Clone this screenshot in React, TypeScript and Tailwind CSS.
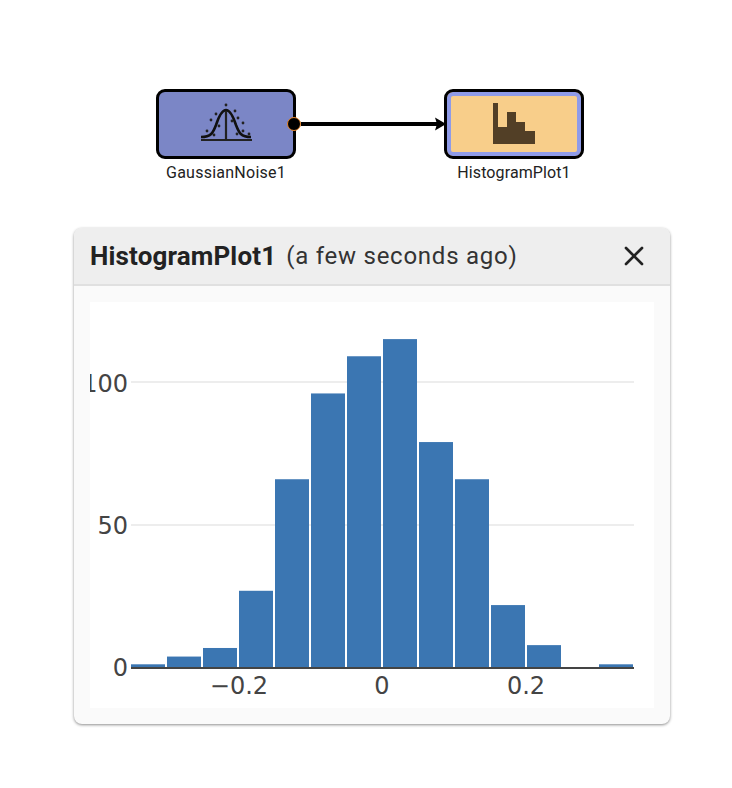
import { X } from 'lucide-react';

const BARS = [1, 4, 7, 27, 66, 96, 109, 115, 79, 66, 22, 8, 0, 1];
const DOTS = [
  [226, 107], [216, 116], [211, 122], [235, 113], [238, 120], [243, 125], [207, 133], [214, 137], [237, 136], [243, 133], [249, 136], [219, 128], [232, 123],
];

function GaussianIcon() {
  return (
    <svg width="60" height="44" viewBox="196 104 60 44" className="block">
      <path d="M201 139 C211 139 213 135 216 127 C219 118 222 112 226 112 C230 112 233 118 236 127 C239 135 241 139 251 139" fill="none" stroke="#111" strokeWidth="2.6" />
      <path d="M201 142 H252 M226 113 V142" fill="none" stroke="#222" strokeWidth="2.2" />
      {DOTS.map(([x, y]) => (
        <circle key={`${x}-${y}`} cx={x} cy={y} r="1.4" fill="#222" />
      ))}
    </svg>
  );
}

function HistogramIcon() {
  return (
    <svg width="44" height="44" viewBox="492 102 44 44" className="block">
      <path d="M493 103 H498 V127 H507 V112 H516 V122 H525 V131 H535 V144 H493 Z" fill="#523f26" />
    </svg>
  );
}

function Chart() {
  return (
    <svg width="564" height="406" viewBox="0 0 564 406" className="block" fontFamily="'DejaVu Sans', sans-serif" fontSize="24" fill="#444">
      <path d="M41 80 H544 M41 223 H544" stroke="#e8e8e8" strokeWidth="1.5" fill="none" />
      {BARS.map((v, i) => {
        const h = v > 0 ? Math.max(v * 2.86, 3.7) : 0;
        return <rect key={i} x={41 + i * 36} y={366 - h} width="34" height={h} fill="#3b76b2" />;
      })}
      <path d="M41 366 H544" stroke="#444" strokeWidth="1.8" fill="none" />
      <text x="38" y="90" textAnchor="end">100</text>
      <text x="38" y="232" textAnchor="end">50</text>
      <text x="38" y="374" textAnchor="end">0</text>
      <text x="149" y="392" textAnchor="middle">−0.2</text>
      <text x="292" y="392" textAnchor="middle">0</text>
      <text x="436" y="392" textAnchor="middle">0.2</text>
    </svg>
  );
}

export default function App() {
  return (
    <div className="w-[732px] h-[788px] bg-white overflow-hidden font-['Roboto',sans-serif]">
      {/* flow diagram */}
      <div className="flex items-start pt-[89px] pl-[156px]">
        <div className="w-[140px] flex flex-col items-center">
          <div className="relative w-[140px] h-[70px] bg-[#7b86c6] border-[3px] border-black rounded-[9px] flex items-center justify-center">
            <GaussianIcon />
            <span className="absolute right-[-8px] top-[25px] w-[14px] h-[14px] rounded-full bg-black border border-[#e8862a]" />
          </div>
          <span className="mt-[6px] text-[16px] tracking-[0.25px] leading-[16px] text-[#222] whitespace-nowrap">GaussianNoise1</span>
        </div>
        <svg width="148" height="70" viewBox="0 0 148 70" className="block">
          <path d="M5 35 H142" stroke="#000" strokeWidth="4" fill="none" />
          <path d="M139 28.5 L150 35 L139 41.5 L141 35 Z" fill="#000" />
        </svg>
        <div className="w-[140px] flex flex-col items-center">
          <div className="w-[140px] h-[70px] bg-[#f8ce8a] border-[3px] border-black rounded-[9px] shadow-[inset_0_0_0_4px_#8f9be8] flex items-center justify-center">
            <HistogramIcon />
          </div>
          <span className="mt-[6px] text-[16px] tracking-[0.1px] leading-[16px] text-[#222] whitespace-nowrap">HistogramPlot1</span>
        </div>
      </div>

      {/* plot card */}
      <div className="mt-[47px] ml-[74px] w-[596px] h-[496px] rounded-[8px] bg-[#fafafa] overflow-hidden shadow-[0_1px_3px_rgba(0,0,0,0.45)] flex flex-col">
        <div className="h-[58px] shrink-0 bg-[#eeeeee] border-b-2 border-[#e0e0e0] flex items-center pl-[16px] pr-[20px]">
          <span className="text-[26px] tracking-[0.15px] font-bold text-[#222] leading-[32px]">HistogramPlot1</span>
          <span className="ml-[10px] text-[24px] tracking-[0.75px] text-[#333] leading-[32px]">(a few seconds ago)</span>
          <X className="ml-auto text-[#222]" size={32} strokeWidth={2} />
        </div>
        <div className="mt-[16px] mx-[16px] bg-white">
          <Chart />
        </div>
      </div>
    </div>
  );
}
